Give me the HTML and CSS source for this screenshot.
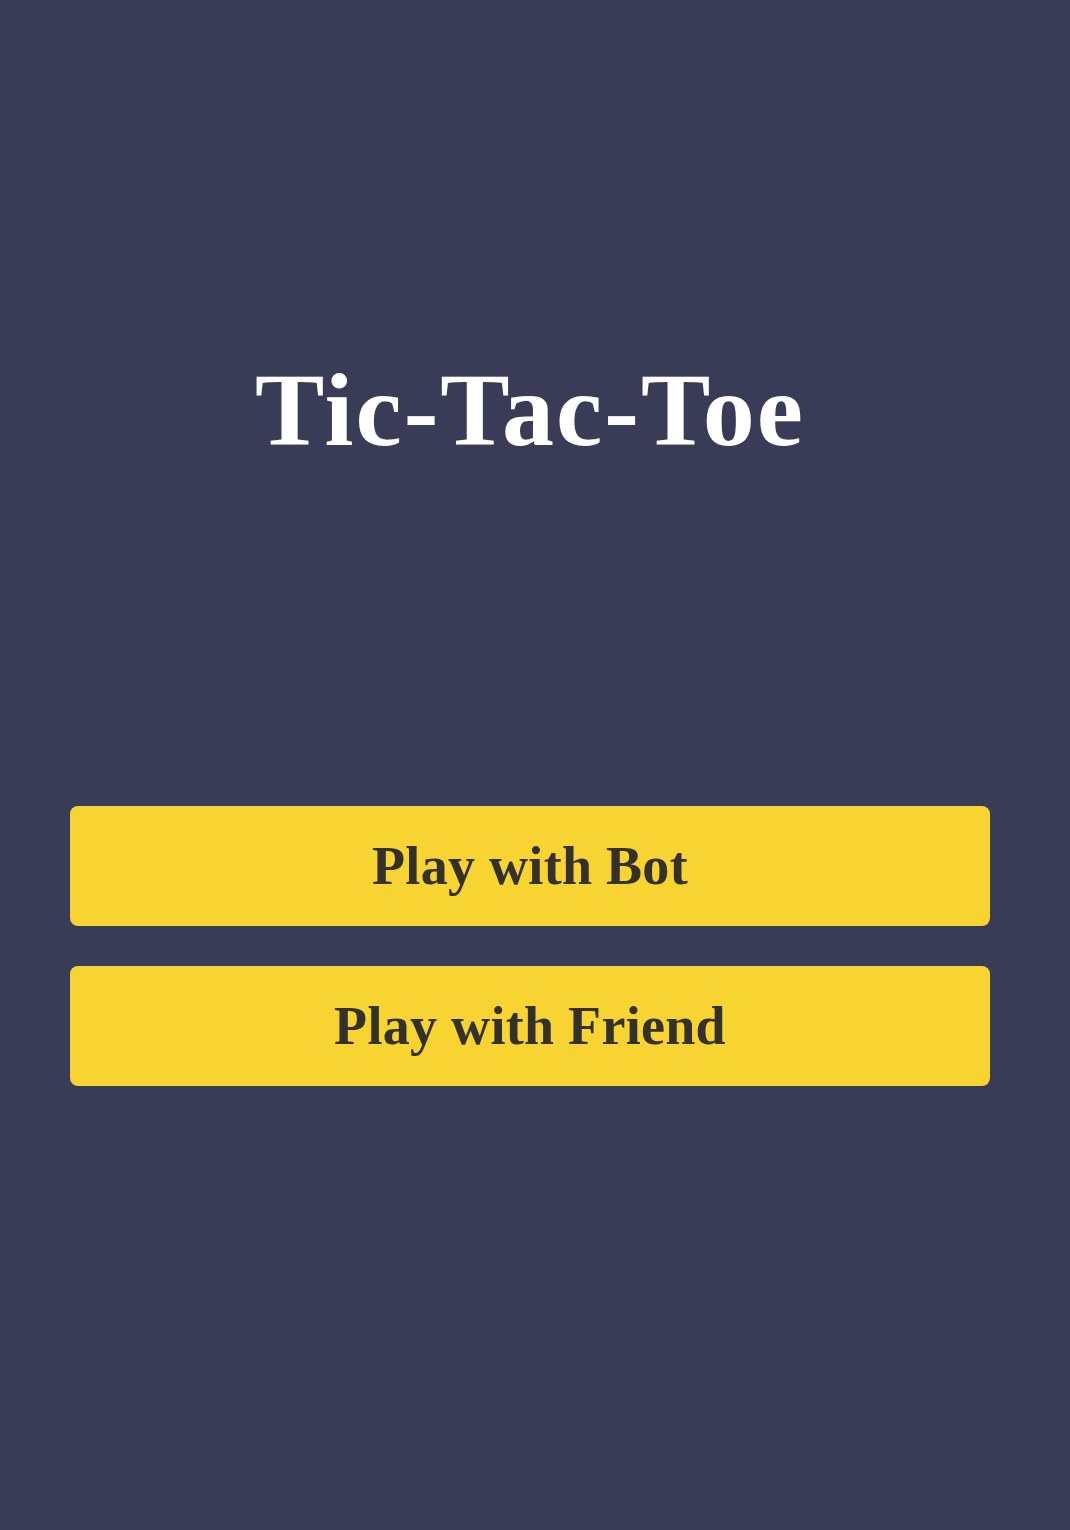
FILE: index.html
```html
<!DOCTYPE html>
<html>
<head>
<meta charset="utf-8">
<link rel="stylesheet" href="styles.css">
<title>Tic-Tac-Toe</title>
</head>
<body>
<main class="screen">
  <h1 class="title">Tic-Tac-Toe</h1>
  <div class="menu">
    <button class="btn">Play with Bot</button>
    <button class="btn">Play with Friend</button>
  </div>
</main>
</body>
</html>
```
FILE: styles.css
```css
html, body {
  margin: 0;
  padding: 0;
  background: #393c57;
}
.screen {
  height: 1530px;
  display: flex;
  flex-direction: column;
  align-items: stretch;
  padding: 0 80px 0 70px;
  box-sizing: border-box;
}
.title {
  margin: 350px 0 0 0;
  text-align: center;
  color: #ffffff;
  font-family: "Liberation Serif", serif;
  font-weight: 700;
  font-size: 104px;
  line-height: 120px;
  letter-spacing: 2px;
}
.menu {
  margin-top: 336px;
  display: flex;
  flex-direction: column;
  gap: 40px;
}
.btn {
  height: 120px;
  width: 920px;
  border: none;
  border-radius: 8px;
  background: #f8d432;
  color: #33312a;
  font-family: "Liberation Serif", serif;
  font-weight: 700;
  font-size: 54px;
  letter-spacing: 0.3px;
  padding: 0;
  cursor: pointer;
}
```
